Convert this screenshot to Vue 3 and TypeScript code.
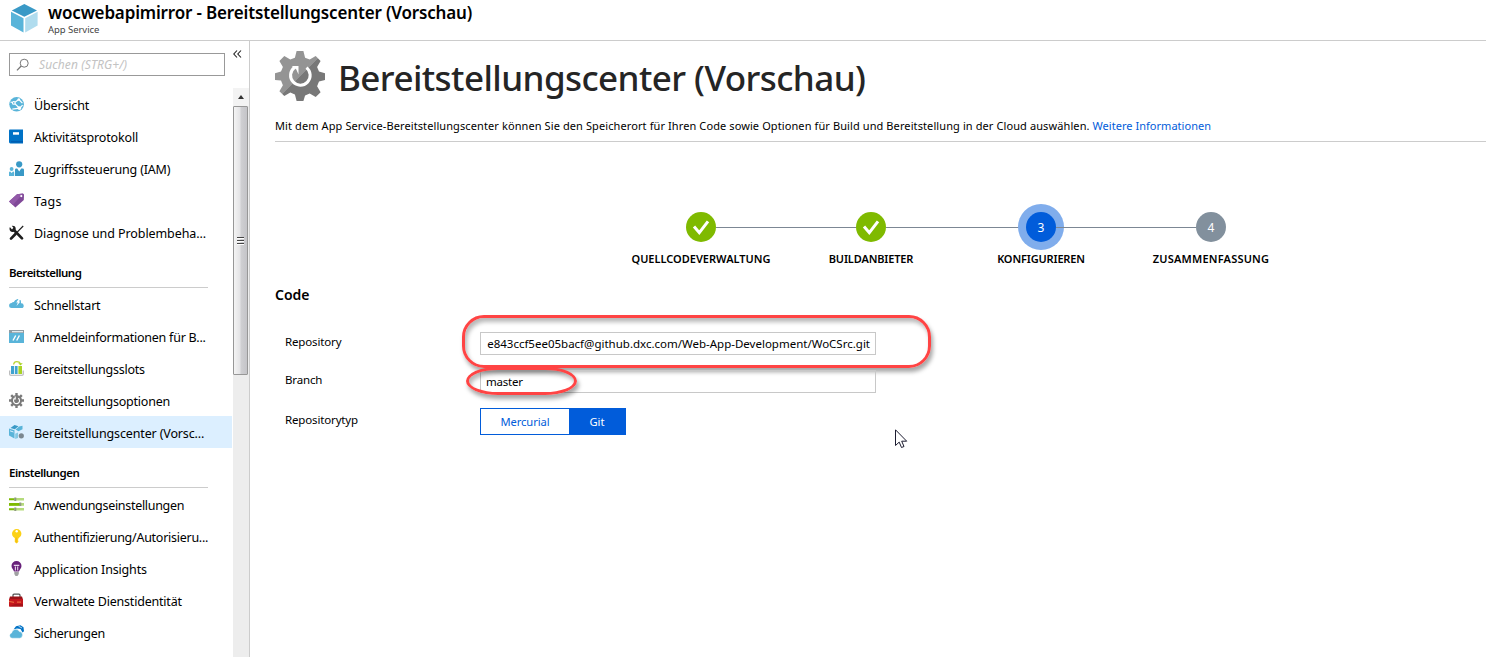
<script setup lang="ts">
type Icon =
  | 'globe' | 'book' | 'people' | 'tag' | 'tools'
  | 'cloud' | 'window' | 'slots' | 'gear' | 'center'
  | 'sliders' | 'key' | 'bulb' | 'toolbox' | 'backup'

interface NavItem { label: string; icon: Icon; spacing: number; active?: boolean }
interface NavGroup { title?: string; items: NavItem[] }
interface Step { label: string; state: 'done' | 'current' | 'todo'; num: number }

const groups: NavGroup[] = [
  {
    items: [
      { label: 'Übersicht', icon: 'globe', spacing: -0.15 },
      { label: 'Aktivitätsprotokoll', icon: 'book', spacing: -0.15 },
      { label: 'Zugriffssteuerung (IAM)', icon: 'people', spacing: -0.18 },
      { label: 'Tags', icon: 'tag', spacing: 0.25 },
      { label: 'Diagnose und Problembeha...', icon: 'tools', spacing: -0.08 },
    ],
  },
  {
    title: 'Bereitstellung',
    items: [
      { label: 'Schnellstart', icon: 'cloud', spacing: -0.22 },
      { label: 'Anmeldeinformationen für B...', icon: 'window', spacing: -0.24 },
      { label: 'Bereitstellungsslots', icon: 'slots', spacing: -0.22 },
      { label: 'Bereitstellungsoptionen', icon: 'gear', spacing: -0.22 },
      { label: 'Bereitstellungscenter (Vorsc...', icon: 'center', spacing: -0.14, active: true },
    ],
  },
  {
    title: 'Einstellungen',
    items: [
      { label: 'Anwendungseinstellungen', icon: 'sliders', spacing: -0.3 },
      { label: 'Authentifizierung/Autorisieru...', icon: 'key', spacing: -0.26 },
      { label: 'Application Insights', icon: 'bulb', spacing: -0.17 },
      { label: 'Verwaltete Dienstidentität', icon: 'toolbox', spacing: -0.2 },
      { label: 'Sicherungen', icon: 'backup', spacing: -0.27 },
    ],
  },
]

const steps: Step[] = [
  { label: 'QUELLCODEVERWALTUNG', state: 'done', num: 1 },
  { label: 'BUILDANBIETER', state: 'done', num: 2 },
  { label: 'KONFIGURIEREN', state: 'current', num: 3 },
  { label: 'ZUSAMMENFASSUNG', state: 'todo', num: 4 },
]
</script>

<template>
  <div class="app">
    <header class="top">
      <svg class="cube" width="27" height="29" viewBox="0 0 27 29">
        <path d="M13.3 0 26 6.4 13.3 12.8.8 6.4Z" fill="#3999c6" />
        <path d="M0 7.7 12.5 14.2V28.6L0 21.6Z" fill="#59b4d9" />
        <path d="M26.6 7.7 14.2 14.2V28.6l12.4-7Z" fill="#b0dcee" />
      </svg>
      <div class="heading">
        <div class="title">wocwebapimirror - Bereitstellungscenter (Vorschau)</div>
        <div class="kind">App Service</div>
      </div>
    </header>

    <div class="body">
      <aside class="side">
        <div class="search-row">
          <div class="search">
            <svg width="14" height="14" viewBox="0 0 14 14" fill="none" stroke="#777" stroke-width="1">
              <circle cx="8.2" cy="5.2" r="4" /><path d="M5.2 8 1 12.4" stroke-width="1.3" />
            </svg>
            <span>Suchen (STRG+/)</span>
          </div>
          <svg class="collapse" width="9" height="8" viewBox="0 0 9 8" fill="none" stroke="#222" stroke-width="1.1">
            <path d="M4 .5.8 4 4 7.5M8 .5 4.8 4 8 7.5" />
          </svg>
        </div>

        <div class="nav-row">
          <nav class="nav">
            <section v-for="(g, i) in groups" :key="i">
              <h3 v-if="g.title"><span>{{ g.title }}</span></h3>
              <div v-for="item in g.items" :key="item.label" class="item" :class="{ active: item.active }">
                <svg width="16" height="16" viewBox="0 0 16 16">
                  <template v-if="item.icon === 'globe'">
                    <circle cx="7.6" cy="7.3" r="7.3" fill="#59b4d9" />
                    <path d="M1.4 5 5 5.900 9.800 2.500M5 5.900l5.600 5.300M9.800 2.500l3.600 3.600M3.300 12.100l7.300-.9 3-3" fill="none" stroke="#fff" stroke-width="1.2" />
                    <circle cx="4.8" cy="5.9" r="1.9" fill="#fff" /><circle cx="10.4" cy="11.1" r="1.9" fill="#fff" />
                    <circle cx="9.8" cy="2.5" r="1.3" fill="#fff" /><circle cx="4.8" cy="5.9" r=".8" fill="#59b4d9" />
                  </template>
                  <template v-else-if="item.icon === 'book'">
                    <path d="M0 1.3Q0 .5.8.5H14v14H1.4Q0 14.5 0 13.1Z" fill="#0072c6" />
                    <path d="M2 12.2h12v1.2H2Z" fill="#0058ad" /><path d="M4 3.2h6v2.5H4Z" fill="#fff" />
                  </template>
                  <template v-else-if="item.icon === 'people'">
                    <circle cx="10.2" cy="3.3" r="3.1" fill="#3999c6" />
                    <path d="M6 15V8.8Q6 7.4 7.4 7.4h.8l2 3 2-3h1.2q1.6 0 1.6 1.4V15Z" fill="#3999c6" />
                    <circle cx="2.6" cy="8" r="1.9" fill="#59b4d9" />
                    <path d="M0 15v-3.4Q0 10.4 1.2 10.4L2.6 12l1.4-1.6q1.2 0 1.2 1.2V15Z" fill="#59b4d9" />
                  </template>
                  <template v-else-if="item.icon === 'tag'">
                    <path d="M0 8.6 8 1.2 14 .5 15 1.4 14.8 7 6.4 14.4Z" fill="#804998" />
                    <path d="M0 8.6 8 1.2 14 .5 3.8 12Z" fill="#9259a8" /><circle cx="12.3" cy="3.1" r="1.1" fill="#fff" />
                  </template>
                  <template v-else-if="item.icon === 'tools'">
                    <path d="M3.5 3.5 13 13.4" stroke="#1e1e1e" stroke-width="2.7" stroke-linecap="round" />
                    <circle cx="3.6" cy="3.8" r="3.1" fill="#1e1e1e" /><path d="M-.4.4 1.2-1 4.4 2.8 3 4.4Z" fill="#fff" />
                    <path d="M14.2 1 6 9.4" stroke="#1e1e1e" stroke-width="1.2" />
                    <path d="M6.5 9 2 13.6" stroke="#1e1e1e" stroke-width="2.7" stroke-linecap="round" />
                  </template>
                  <template v-else-if="item.icon === 'cloud'">
                    <path d="M2.600 11.100a2.500 2.500 0 0 1 0-5 2.600 2.600 0 0 1 2.300-1.200A4 4 0 0 1 12 3.800V6.300a2.400 2.400 0 0 1 .6 4.800Z" fill="#59b4d9" />
                    <path d="M9.700 1.700 7.200 5.500h1.700L7.500 8.900 11.400 4.400H9.700L12 1.700Z" fill="#fff" />
                  </template>
                  <template v-else-if="item.icon === 'window'">
                    <path d="M0 1h15v13H0Z" fill="#59b4d9" /><path d="M0 1h15v3H0Z" fill="#8f9ca3" />
                    <path d="M3 2h11v1.3H3Z" fill="#e3eaed" /><path d="M6.7 6.5 4 11.5M10.4 6.5 7.7 11.5" stroke="#fff" stroke-width="1.4" />
                  </template>
                  <template v-else-if="item.icon === 'slots'">
                    <path d="M.7 9.5v3.7q0 1.1 1.2 1.1h11q1.3 0 1.3-1.1V9.5" fill="none" stroke="#b0b1b2" stroke-width="1.1" />
                    <path d="M2 5h3v8H2ZM5.8 5h2.8v8H5.8Z" fill="#3fa3cf" /><path d="M9.4 5h3.600v8H9.400Z" fill="#a9d325" />
                    <path d="M4.600 3.500Q5 .7 7.800.7t3.700 2" fill="none" stroke="#b8d432" stroke-width="1.3" /><path d="M9.200 2.200h4.600l-2.300 2.400Z" fill="#a9d325" />
                  </template>
                  <template v-else-if="item.icon === 'gear'">
                    <circle cx="7.5" cy="7.5" r="5.5" fill="#7a7a7a" />
                    <path d="M7.5 0v15M0 7.5h15M2.2 2.2l10.600 10.600M12.800 2.200 2.200 12.800" stroke="#7a7a7a" stroke-width="2.4" />
                    <path d="M5.500 5.400A3 3 0 1 0 9.300 5.200M6.200 3.600v2.400h-2" fill="none" stroke="#fff" stroke-width="1.1" />
                  </template>
                  <template v-else-if="item.icon === 'center'">
                    <path d="M1.500 3 5.500 0 9.500 1.200 5.800 4.300Z" fill="#3999c6" />
                    <path d="M6.500 4.600 10.200 1.500 13.500.8V4.200L9.500 6.300Z" fill="#59b4d9" />
                    <path d="M0 3.600 5.500 5.200V13.500L0 10.500Z" fill="#59b4d9" />
                    <path d="M1 5.800 4.500 7" stroke="#dcefff" stroke-width="1" />
                    <path d="M6.200 8.800 9 7.600V13L6.200 14Z" fill="#85c8e3" />
                    <circle cx="12.300" cy="10.800" r="2.600" fill="#7a8790" />
                  </template>
                  <template v-else-if="item.icon === 'sliders'">
                    <path d="M0 1h15v2.600H0ZM0 6h15v2.800H0ZM0 11h15v2.600H0Z" fill="#b5db7c" />
                    <path d="M0 1.500h5v1.600H0ZM0 6h11v2.800H0ZM0 11.500h5v1.600H0Z" fill="#7fba00" />
                    <path d="M5.300.6h2v3.400h-2ZM10.300 5.600h2v3.500h-2ZM5.300 10.600h2V14h-2Z" fill="#8f9a80" />
                  </template>
                  <template v-else-if="item.icon === 'key'">
                    <circle cx="7.700" cy="4.700" r="4.700" fill="#fcd116" /><circle cx="7.700" cy="2.300" r="1.200" fill="#fff" />
                    <path d="M5.800 8h3.800v1.500l-.8.700.8.700-.8.800.8.800-.8.700V13.500L7.700 14.500 5.800 13Z" fill="#fcd116" /><path d="M7.200 8.500v5" stroke="#eeb211" stroke-width=".8" />
                  </template>
                  <template v-else-if="item.icon === 'bulb'">
                    <path d="M7.500 0a5 5 0 0 1 5 5c0 2.300-1.800 3.200-2.500 5.400H5C4.300 8.200 2.500 7.300 2.500 5a5 5 0 0 1 5-5Z" fill="#68217a" />
                    <path d="M6.400 9.500V5.400M8.700 9.500V5.400M4.800 4.400h5.500" stroke="#e7d6ec" stroke-width="1.100" fill="none" />
                    <path d="M5.300 11h4.500v2L8.500 15h-2L5.300 13Z" fill="#a0a1a2" />
                  </template>
                  <template v-else-if="item.icon === 'toolbox'">
                    <path d="M4 4V2.200q0-1 1-1h5q1 0 1 1V4" fill="none" stroke="#505050" stroke-width="1.200" />
                    <path d="M1 3.600h12l1 3H0Z" fill="#9a1218" /><path d="M0 6h14v7.500H0Z" fill="#c4161c" />
                    <path d="M0 7.800 5 8.800v1.200L0 9ZM8 8.600h4v1.200H8Z" fill="#e8653c" /><path d="M0 13.500 6 11h8v2.500Z" fill="#a51218" />
                  </template>
                  <template v-else>
                    <path d="M4.500 4.500 7 1.200 11.500.2l3 2L15 6.200 13.500 7.500 11.500 4 8 3.500Z" fill="#0072c6" />
                    <path d="M9.500 1.200 13 3" stroke="#fff" stroke-width=".7" />
                    <path d="M3 13.200a2.700 2.700 0 0 1-.3-5.300 4 4 0 0 1 7.500-1.400 3.400 3.400 0 0 1 .7 6.700Z" fill="#59b4d9" stroke="#fff" stroke-width=".4" />
                  </template>
                </svg>
                <span :style="{ letterSpacing: item.spacing + 'px' }">{{ item.label }}</span>
              </div>
            </section>
          </nav>
          <div class="scroll">
            <div class="arrow"><i></i></div>
            <div class="thumb"><i></i><i></i><i></i></div>
          </div>
        </div>
      </aside>

      <main class="main">
        <div class="hero">
          <svg width="50" height="50" viewBox="0 0 50 50">
            <defs>
              <linearGradient id="metal" x1="0" y1="0" x2="1" y2="1">
                <stop offset=".5" stop-color="#949494" /><stop offset=".5" stop-color="#787878" />
              </linearGradient>
            </defs>
            <path
              d="M21.600 0h6.800l1.700 6.700 4.600 1.900 6-3.500 4.900 4.800-3.500 6 1.900 4.700 6 1.600v6.700l-6 1.700-1.900 4.700 3.500 5.900-4.900 4.900-6-3.500-4.600 1.900L28.400 50h-6.800l-1.700-6.500-4.600-1.900-6 3.500-4.900-4.900 3.500-5.900L6 29.600 0 28.900v-6.700l6-1.600 1.900-4.700-3.500-6 4.900-4.800 6 3.500 4.600-1.900Z"
              fill="url(#metal)"
            />
            <path d="M31.500 16.700a9.800 9.800 0 1 1-12-.2" fill="none" stroke="#fff" stroke-width="3" />
            <path d="M16.700 15h6.800v8.500l-2.200-5Z" fill="#fff" />
          </svg>
          <h1>Bereitstellungscenter (Vorschau)</h1>
        </div>
        <p class="intro">
          <span class="intro-text">Mit dem App Service-Bereitstellungscenter können Sie den Speicherort für Ihren Code sowie Optionen für Build und Bereitstellung in der Cloud auswählen.</span>
          <a>Weitere Informationen</a>
        </p>

        <ol class="steps">
          <li v-for="s in steps" :key="s.num" :class="s.state">
            <div class="dot">
              <svg v-if="s.state === 'done'" width="30" height="30" viewBox="0 0 30 30" fill="none" stroke="#fff" stroke-width="3">
                <path d="m8 14.500 5.300 6.200L22 9.300" />
              </svg>
              <span v-else>{{ s.num }}</span>
            </div>
            <div class="step-label">{{ s.label }}</div>
          </li>
        </ol>

        <h2>Code</h2>
        <div class="form">
          <div class="field">
            <label>Repository</label>
            <div class="input repo">
              <span>e843ccf5ee05bacf@github.dxc.com/Web-App-Development/WoCSrc.git</span>
              <div class="mark mark-repo"></div>
            </div>
          </div>
          <div class="field">
            <label>Branch</label>
            <div class="input branch">
              <span>master</span>
              <div class="mark mark-branch"></div>
            </div>
          </div>
          <div class="field last">
            <label>Repositorytyp</label>
            <div class="toggle"><span class="off">Mercurial</span><span class="on">Git</span></div>
          </div>
        </div>
      </main>
    </div>

    <svg class="pointer" width="13" height="20" viewBox="0 0 13 20">
      <path d="M.5.8v15.700l3.700-3.400 2.300 5.400 2.500-1-2.300-5.300h5Z" fill="#fff" stroke="#1c1c30" />
    </svg>
  </div>
</template>

<style>
body { margin: 0; overflow: hidden; }
</style>

<style scoped>
* { box-sizing: border-box; }
.app {
  position: relative; width: 1486px; height: 657px; overflow: hidden;
  display: flex; flex-direction: column; background: #fff; color: #000;
  font-family: "Noto Sans", "Open Sans", sans-serif; font-size: 12px;
}
.app span, .title, .kind, h1, h2, label, .step-label { white-space: nowrap; }
.top { display: flex; height: 41px; flex: none; border-bottom: 1px solid #ccc; padding: 4px 0 0 11px; }
.heading { padding-left: 10px; }
.title { font-size: 17px; font-weight: 600; line-height: 20px; margin-top: -1px; letter-spacing: -.16px; }
.kind { font-size: 9.5px; line-height: 14px; color: #444; letter-spacing: -.05px; }
.body { display: flex; flex: 1; min-height: 0; }
.side { width: 250px; flex: none; border-right: 1px solid #ccc; display: flex; flex-direction: column; }
.search-row { height: 47px; flex: none; display: flex; padding: 12px 0 0 9px; }
.search { width: 216px; height: 23px; border: 1px solid #999; display: flex; align-items: center; padding-left: 6px; gap: 9px; color: #c3c3c3; font-style: italic; font-size: 12px; letter-spacing: .1px; }
.collapse { margin: -3px 0 0 8px; }
.nav-row { flex: 1; display: flex; min-height: 0; overflow: hidden; }
.nav { width: 232px; flex: none; }
.item { height: 32px; display: flex; align-items: flex-start; padding: 9px 0 0 9px; gap: 9px; font-size: 12.5px; line-height: 18px; }
.item svg { flex: none; overflow: visible; }
.item.active { background: #dcefff; }
h3 { margin: 0 0 0 9px; width: 199px; height: 40px; border-bottom: 1px solid #ccc; font-size: 11.5px; font-weight: 600; line-height: 17px; padding-top: 16px; letter-spacing: -.48px; }
.scroll { margin-left: 1px; width: 16px; background: #ededed; }
.arrow { height: 18px; display: flex; align-items: center; justify-content: center; background: #f3f3f3; }
.arrow i { border: 3.5px solid transparent; border-bottom: 4px solid #333; border-top: 0; }
.thumb { width: 15px; height: 269px; border: 1px solid #979797; border-radius: 1px; background: linear-gradient(90deg, #f4f4f4, #e4e4e6 45%, #cfcfd2 55%, #c4c4c8); display: flex; flex-direction: column; align-items: center; justify-content: center; gap: 2px; }
.thumb i { width: 7px; height: 1px; background: #444; box-shadow: 0 1px #fff; }
.main { flex: 1; min-width: 0; padding: 10px 0 0 25px; }
.hero { display: flex; height: 50px; }
h1 { margin: 0 0 0 13px; font-size: 35px; font-weight: 500; line-height: 54px; color: #252525; letter-spacing: -.57px; }
.intro { margin: 16px 0 0; height: 25px; border-bottom: 1px solid #ccc; line-height: 18px; font-size: 11px; display: flex; gap: 3px; }
.intro-text { letter-spacing: .1px; }
.intro a { color: #015cda; white-space: nowrap; letter-spacing: .03px; }
.steps { list-style: none; display: grid; grid-template-columns: repeat(4, 170px); margin: 70px 0 0 341px; padding: 0; }
.steps li { position: relative; display: flex; flex-direction: column; align-items: center; height: 68px; }
.dot { width: 30px; height: 30px; border-radius: 50%; color: #fff; display: flex; align-items: center; justify-content: center; font-size: 12px; }
.done .dot { background: #7fba00; }
.current .dot { background: #015cda; box-shadow: 0 0 0 8px #80adec; }
.todo .dot { background: #82909d; }
.steps li:not(:last-child)::after { content: ''; position: absolute; left: 100px; width: 140px; top: 15px; height: 1px; background: #7c8794; }
.step-label { margin-top: 8px; font-size: 11px; font-weight: 600; line-height: 18px; }
.current .step-label, .done:nth-child(2) .step-label { letter-spacing: -.15px; }
.todo .step-label { letter-spacing: .2px; }
h2 { margin: 5px 0 0; font-size: 14px; font-weight: 600; line-height: 20px; }
.form { padding: 27px 0 0 10px; }
.field { display: flex; height: 38px; }
label { width: 195px; line-height: 20px; font-size: 11.5px; letter-spacing: -.15px; }
.last label { padding-top: 2px; }
.input { position: relative; width: 396px; height: 23px; border: 1px solid #c8c8c8; line-height: 22px; padding: 0 5px; font-size: 11.5px; }
.branch { letter-spacing: -.2px; }
.repo { text-align: right; }
.mark { position: absolute; border: 3px solid #f44; box-shadow: 2px 4px 4px rgba(0,0,0,.35), inset 2px 4px 4px rgba(0,0,0,.28); }
.mark-repo { left: -19px; top: -18px; width: 469px; height: 53px; border-radius: 22px; }
.mark-branch { left: -15px; top: -4px; width: 111px; height: 28px; border-radius: 32px / 14px; }
.toggle { display: flex; height: 27px; border: 1px solid #015cda; line-height: 26px; text-align: center; font-size: 11.2px; }
.off { width: 88px; color: #015cda; letter-spacing: -.1px; }
.on { width: 56px; color: #fff; background: #015cda; }
.pointer { position: absolute; left: 895px; top: 429px; }
</style>
